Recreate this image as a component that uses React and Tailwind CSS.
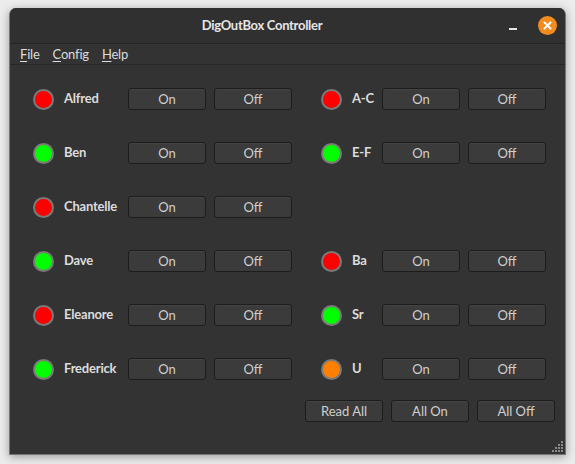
import React from 'react';

const left = [
  { name: 'Alfred', color: 'bg-[#ff0000]' },
  { name: 'Ben', color: 'bg-[#00ff00]' },
  { name: 'Chantelle', color: 'bg-[#ff0000]' },
  { name: 'Dave', color: 'bg-[#00ff00]' },
  { name: 'Eleanore', color: 'bg-[#ff0000]' },
  { name: 'Frederick', color: 'bg-[#00ff00]' },
];

const right = [
  { name: 'A-C', color: 'bg-[#ff0000]' },
  { name: 'E-F', color: 'bg-[#00ff00]' },
  null,
  { name: 'Ba', color: 'bg-[#ff0000]' },
  { name: 'Sr', color: 'bg-[#00ff00]' },
  { name: 'U', color: 'bg-[#ff8000]' },
];

function Btn({ children }) {
  return (
    <button
      type="button"
      className="w-[78px] h-[22px] rounded-[3px] border border-[#1c1c1c] bg-[#3b3b3b] text-[13px] text-[#cfcfcf] leading-none shadow-[inset_0_1px_0_#444]"
    >
      {children}
    </button>
  );
}

function Led({ color }) {
  return <div className={`w-[21px] h-[21px] rounded-full border-2 border-[#7a7a7a] ${color}`} />;
}

function Channel({ item, nameWidth }) {
  return (
    <div className="flex items-center">
      <Led color={item.color} />
      <span className={`${nameWidth} pl-[10px] text-[13px] font-bold tracking-[-0.2px] text-[#dcdcdc]`}>{item.name}</span>
      <div className="flex gap-[8px]">
        <Btn>On</Btn>
        <Btn>Off</Btn>
      </div>
    </div>
  );
}

function Menu({ label }) {
  return (
    <span className="text-[13px] tracking-[-0.2px] text-[#dcdcdc]">
      <span className="underline underline-offset-2">{label[0]}</span>
      {label.slice(1)}
    </span>
  );
}

export default function App() {
  return (
    <div className="w-[575px] h-[464px] bg-[#ececec] pt-[8px] pl-[9px] overflow-hidden" style={{ fontFamily: 'Lato, "Noto Sans", sans-serif' }}>
      <div className="w-[557px] h-[447px] rounded-t-[7px] bg-[#333333] border border-[#777] border-t-0 shadow-[0_2px_10px_rgba(0,0,0,0.35)] flex flex-col overflow-hidden">
        {/* Title bar */}
        <div className="h-[36px] flex items-center bg-[#303030] border-b border-[#242424] shrink-0">
          <div className="flex-1 text-center pl-[5px] text-[13px] font-bold tracking-[-0.3px] text-[#e6e6e6]">DigOutBox Controller</div>
          <div className="w-[56px] flex items-center">
            <div className="w-[8px] h-[2px] bg-[#e6e6e6] mt-[6px]" />
            <div className="w-[19px] h-[19px] rounded-full bg-[#f28c1e] ml-[21px] flex items-center justify-center">
              <svg width="9" height="9" viewBox="0 0 9 9">
                <path d="M1.5 1.5 L7.5 7.5 M7.5 1.5 L1.5 7.5" stroke="#fff" strokeWidth="2" strokeLinecap="round" />
              </svg>
            </div>
          </div>
        </div>

        {/* Menu bar */}
        <div className="h-[21px] flex items-center gap-[13px] pl-[10px] pt-[2px] border-b border-[#262626] shrink-0">
          <Menu label="File" />
          <Menu label="Config" />
          <Menu label="Help" />
        </div>

        {/* Body */}
        <div className="flex-1 flex flex-col pt-[23px] pl-[23px]">
          <div className="flex flex-col gap-[32px]">
            {left.map((l, i) => (
              <div key={l.name} className="flex items-center h-[22px]">
                <Channel item={l} nameWidth="w-[74px]" />
                <div className="ml-[29px]">
                  {right[i] && <Channel item={right[i]} nameWidth="w-[40px]" />}
                </div>
              </div>
            ))}
          </div>
          <div className="flex justify-end gap-[8px] mt-[20px] pr-[10px]">
            <Btn>Read All</Btn>
            <Btn>All On</Btn>
            <Btn>All Off</Btn>
          </div>
          <div className="flex-1 flex items-end justify-end pr-[1px] pb-[1px]">
            <svg width="12" height="12" viewBox="0 0 12 12">
              {[
                [9, 0], [6, 3], [9, 3], [3, 6], [6, 6], [9, 6], [0, 9], [3, 9], [6, 9], [9, 9],
              ].map(([x, y]) => (
                <rect key={`${x}-${y}`} x={x} y={y} width="2" height="2" fill="#8a8a8a" />
              ))}
            </svg>
          </div>
        </div>
      </div>
    </div>
  );
}
